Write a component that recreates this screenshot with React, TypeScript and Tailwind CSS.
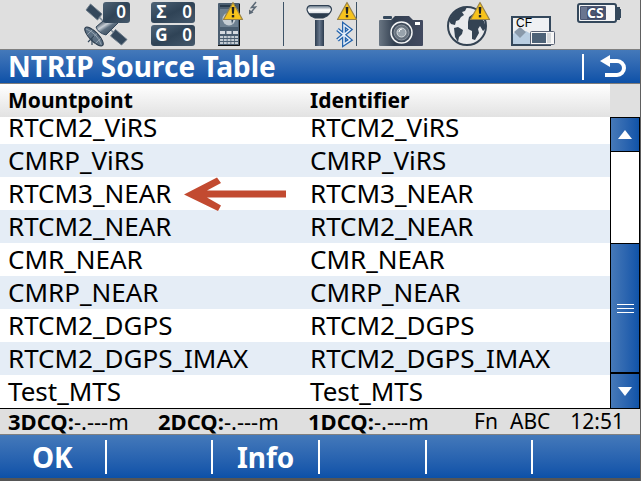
import React from 'react';

interface Mountpoint {
  name: string;
  identifier: string;
}

const mountpoints: Mountpoint[] = [
  { name: 'RTCM2_ViRS', identifier: 'RTCM2_ViRS' },
  { name: 'CMRP_ViRS', identifier: 'CMRP_ViRS' },
  { name: 'RTCM3_NEAR', identifier: 'RTCM3_NEAR' },
  { name: 'RTCM2_NEAR', identifier: 'RTCM2_NEAR' },
  { name: 'CMR_NEAR', identifier: 'CMR_NEAR' },
  { name: 'CMRP_NEAR', identifier: 'CMRP_NEAR' },
  { name: 'RTCM2_DGPS', identifier: 'RTCM2_DGPS' },
  { name: 'RTCM2_DGPS_IMAX', identifier: 'RTCM2_DGPS_IMAX' },
  { name: 'Test_MTS', identifier: 'Test_MTS' },
];

const qualities = ['3DCQ:', '2DCQ:', '1DCQ:'];
const softKeys = ['OK', '', 'Info', '', '', ''];

const SLATE = '#34485c';

// Yellow warning triangle, x is the left edge
const Warning: React.FC<{ x: number }> = ({ x }) => (
  <g transform={`translate(${x} 1)`}>
    <path d="M10 1.5 L19.5 18.5 H0.5 Z" fill="#f7c31c" stroke="#9a8448" strokeWidth="1.2" strokeLinejoin="round" />
    <path d="M8.6 6 H11.4 L10.9 12.8 H9.1 Z" fill="#222" />
    <rect x="8.8" y="14" width="2.4" height="2.4" fill="#222" />
  </g>
);

const SatelliteIcon = () => (
  <svg viewBox="75 0 66 49" className="h-[49px] w-[66px]" role="img" aria-label="Satellites">
    <defs>
      <linearGradient id="badge" x1="0" y1="0" x2="1" y2="1">
        <stop offset="0" stopColor="#4e6376" />
        <stop offset="0.5" stopColor="#2f4356" />
        <stop offset="1" stopColor="#45596c" />
      </linearGradient>
      <linearGradient id="metal" x1="0" y1="0" x2="1" y2="1">
        <stop offset="0.1" stopColor="#28384a" />
        <stop offset="0.35" stopColor="#c9d0d7" />
        <stop offset="0.5" stopColor="#5d6f80" />
        <stop offset="1" stopColor="#223244" />
      </linearGradient>
    </defs>
    <path d="M90.500 4 L102 14 L97.500 20 L86 10 Z" fill={SLATE} stroke="#6d7c8a" />
    <path d="M99 17 L103 21 M111 30 L115 34" stroke="#7a8896" strokeWidth="1.500" />
    <path d="M115.500 29.500 L127 39.500 L121.500 45 L110.500 36 Z" fill={SLATE} stroke="#6d7c8a" />
    <path d="M103 21 L116 21 L118 23 L106 35 Q98 33 96 27 Z" fill="url(#metal)" stroke="#34485c" />
    <g transform="rotate(46 94 36.500)">
      <ellipse cx="94" cy="36.500" rx="12.500" ry="4.500" fill="#5b6f82" stroke="#273748" />
      <path d="M83 37 Q94 32 105 37 M88 33 V40 M94 32 V41 M100 33 V40" stroke="#a9b5c0" strokeWidth="0.700" fill="none" />
    </g>
    <path d="M94 36 L88 42 M92 38 V45" stroke="#34485c" strokeWidth="1.200" />
    <rect x="103" y="2" width="27" height="21" rx="3" fill="url(#badge)" />
    <text x="121" y="18" textAnchor="middle" fontSize="17" fontWeight="600" fill="#fff">0</text>
  </svg>
);

const CountersIcon = () => (
  <svg viewBox="141 0 66 49" className="h-[49px] w-[66px]" role="img" aria-label="Satellite counters">
    <rect x="151" y="2" width="44" height="21" rx="3" fill="url(#badge)" />
    <rect x="151" y="25" width="44" height="21" rx="3" fill="url(#badge)" />
    <g fill="#fff" fontSize="17" fontWeight="700" textAnchor="middle">
      <text x="161.500" y="18">Σ</text>
      <text x="187" y="18" fontWeight="600">0</text>
      <text x="161.500" y="41">G</text>
      <text x="187" y="41" fontWeight="600">0</text>
    </g>
  </svg>
);

const HandheldIcon = () => (
  <svg viewBox="207 0 76 49" className="h-[49px] w-[76px]" role="img" aria-label="Handheld link">
    <rect x="218" y="3" width="22" height="43" rx="1" fill="#4a5d70" />
    <path d="M218 45.500 H239.500 V4" stroke="#111" fill="none" />
    <rect x="220" y="5" width="16" height="2" fill="#27394b" />
    <rect x="220" y="9" width="18" height="18" fill="#6e8091" />
    <circle cx="229" cy="19" r="6.500" fill="#c6cdd4" />
    <path d="M225 15 L230 14 L229 19 L225 20 Z M231 18 L234 18 L232 24 Z" fill={SLATE} />
    <g fill="#d5dae0">
      <rect x="220" y="31" width="5" height="3" />
      <rect x="226.500" y="31" width="5" height="3" />
      <rect x="233" y="31" width="5" height="3" />
    </g>
    <path d="M220 37 H238 M220 40 H238 M220 43 H238" stroke="#c3cbd2" strokeWidth="2" strokeDasharray="3 0.750" />
    <Warning x={223} />
    <path d="M256 2 L251.500 7.500 L255.500 7 L250.500 13" stroke="#5c6976" strokeWidth="1.500" fill="none" />
    <path d="M249 9.500 V14.500 L253.500 12.500 Z" fill="#5c6976" />
  </svg>
);

const ReceiverIcon = () => (
  <svg viewBox="283 0 74 49" className="h-[49px] w-[74px]" role="img" aria-label="Receiver, Bluetooth">
    <defs>
      <linearGradient id="head" x1="0" y1="0" x2="0" y2="1">
        <stop offset="0" stopColor="#56697c" />
        <stop offset="0.35" stopColor="#fff" />
        <stop offset="0.6" stopColor="#dfe3e8" />
        <stop offset="0.65" stopColor="#2b3c4e" />
      </linearGradient>
      <linearGradient id="pole">
        <stop offset="0" stopColor="#2c3c4f" />
        <stop offset="0.5" stopColor="#65758a" />
        <stop offset="1" stopColor="#2c3c4f" />
      </linearGradient>
    </defs>
    <path d="M283.500 2 V46 M356.500 2 V46" stroke="#3d5266" />
    <path d="M310 5.500 H328 Q331 6 331.500 9 Q331.500 12 327 16 L323 18 H315 L311 16 Q307 12 307 9 Q307.500 6 310 5.500 Z" fill="url(#head)" stroke="#2f4053" strokeWidth="1.200" />
    <rect x="315" y="20" width="9" height="26" fill="url(#pole)" />
    <path d="M337.500 29.500 L350 40 L344 44 V25 L350 29.500 L337.500 40" fill="none" stroke="#2464ad" strokeWidth="4" />
    <path d="M337.500 29.500 L350 40 L344 44 V25 L350 29.500 L337.500 40" fill="none" stroke="#e9f1fa" strokeWidth="1.500" />
    <Warning x={337} />
  </svg>
);

const CameraIcon = () => (
  <svg viewBox="357 0 80 49" className="h-[49px] w-[80px]" role="img" aria-label="Camera">
    <defs>
      <linearGradient id="camera">
        <stop offset="0" stopColor="#6a7683" />
        <stop offset="0.35" stopColor="#323f50" />
        <stop offset="1" stopColor="#424a60" />
      </linearGradient>
    </defs>
    <rect x="383" y="16" width="9" height="3" rx="1" fill={SLATE} />
    <path d="M380 20 H391 L395 16 H409 L413 20 H422 Q423 20 423 21 V45 Q423 46 422 46 H380 Q379 46 379 45 V21 Q379 20 380 20 Z" fill="url(#camera)" />
    <circle cx="401.500" cy="32.500" r="10.500" fill="#3f4b5a" stroke="#f3f4f5" strokeWidth="1.500" />
    <circle cx="401.500" cy="32.500" r="7.500" fill="#67727e" stroke="#8b949e" />
    <circle cx="401.500" cy="32.500" r="4.500" fill="#98a3ac" stroke="#d5dadd" />
    <path d="M399 32 A3 3 0 0 1 402 29" stroke="#fff" fill="none" />
    <rect x="415" y="22" width="5" height="3" fill="#fff" />
  </svg>
);

const GlobeIcon = () => (
  <svg viewBox="437 0 66 49" className="h-[49px] w-[66px]" role="img" aria-label="Internet">
    <circle cx="467" cy="26" r="19" fill="#e9eaec" stroke="#344353" strokeWidth="2" />
    <path d="M449 21 Q452 12 461 8 L467 7 L465 11 L462 12 L464 15 L461 17 L459 20 L456 21 L455 25 L451 24 Z" fill="#344353" />
    <path d="M454 28 L458 27 L463 30 L462 34 L459 37 L458 42 L455 37 Z" fill="#344353" />
    <path d="M469 17 L473 14 L479 17 L484 21 L486 28 L483 31 L480 26 L478 29 L479 33 L475 40 L472 39 L472 31 L468 29 L468 22 Z" fill="#344353" />
    <Warning x={470} />
  </svg>
);

const CardIcon = () => (
  <svg viewBox="503 0 60 49" className="h-[49px] w-[60px]" role="img" aria-label="CF card">
    <rect x="512" y="17" width="38" height="28" fill="#eff1f3" stroke={SLATE} strokeWidth="2" />
    <path d="M513 34 L517 31 L521 35 L526 31 L531 34 V44 H513 Z" fill="#b9cee2" />
    <path d="M520 27 L526 32 L520 38 L514 32 Z" fill="#8999aa" />
    <text x="516" y="27" fontSize="12" fill="#000" className="font-['Liberation_Sans',sans-serif]">CF</text>
    <rect x="530.500" y="31.500" width="24" height="13" rx="1" fill="#f7f7f7" stroke="#5a6375" />
    <rect x="532" y="33" width="14" height="10" fill="#4d6277" />
    <rect x="547" y="33" width="4" height="10" fill="#d5d8da" />
  </svg>
);

const BatteryIcon = () => (
  <svg viewBox="563 0 77 49" className="h-[49px] w-[77px]" role="img" aria-label="Battery">
    <rect x="578" y="4" width="38" height="18" rx="2" fill="#f4f5f6" stroke="#34485c" strokeWidth="2" />
    <rect x="580" y="6" width="26" height="14" rx="1" fill="#4c5773" />
    <rect x="581" y="7" width="6" height="12" fill="#6a7690" />
    <path d="M617 7 H620 V9 H621 V18 H620 V20 H617 Z" fill="#34485c" />
    <text x="587" y="18" fontSize="14" fontWeight="700" fill="#fff" stroke="#3b4663" strokeWidth="2" paintOrder="stroke">CS</text>
  </svg>
);

const StatusIcons = () => (
  <header className="flex h-[50px] overflow-hidden border-b border-[#808080] bg-[#dfdfdf] pl-[75px]">
    <SatelliteIcon />
    <CountersIcon />
    <HandheldIcon />
    <ReceiverIcon />
    <CameraIcon />
    <GlobeIcon />
    <CardIcon />
    <BatteryIcon />
  </header>
);

// Red pointer drawn next to the mountpoint to pick
const PointerArrow = () => (
  <svg viewBox="0 0 104 34" className="absolute top-0 left-[183px] h-[34px] w-[104px]" aria-hidden="true">
    <path d="M1 17.500 L34 0.500 L38 6 L24 13.500 H103 V20.500 H24 L38 28.500 L35 34 Z" fill="#c24a30" />
  </svg>
);

const ScrollBar = () => (
  <div className="flex w-[30px] shrink-0 flex-col">
    <div className="h-[33px] bg-[#e0e0e0]" />
    <div className="flex flex-1 flex-col border-x border-t border-black bg-white">
      <button aria-label="Scroll up" className="flex h-[34px] items-center justify-center border-b border-black bg-linear-to-r from-[#4679b8] to-[#0f53a8]">
        <svg viewBox="0 0 14 9" className="h-[9px] w-[14px]" fill="#fff"><path d="M7 0 L14 9 H0 Z" /></svg>
      </button>
      <div className="flex-1" />
      <div className="flex h-[130px] flex-col items-center justify-center gap-[3px] border-y border-black bg-linear-to-r from-[#4679b8] to-[#0f53a8]">
        <span className="h-px w-[17px] bg-white" />
        <span className="h-px w-[17px] bg-white" />
        <span className="h-px w-[17px] bg-white" />
      </div>
      <button aria-label="Scroll down" className="flex h-[35px] items-center justify-center border-t border-black bg-linear-to-r from-[#4679b8] to-[#0f53a8]">
        <svg viewBox="0 0 14 9" className="h-[9px] w-[14px]" fill="#fff"><path d="M0 0 H14 L7 9 Z" /></svg>
      </button>
    </div>
  </div>
);

const SourceTable = () => (
  <table className="flex-1 table-fixed border-collapse text-left text-[26px] text-black">
    <thead>
      <tr className="h-[33px] bg-linear-to-b from-white to-[#e2e2e2] text-[21px] leading-[33px]">
        <th className="w-[310px] p-0 pl-2 font-bold">Mountpoint</th>
        <th className="p-0 font-bold">Identifier</th>
      </tr>
    </thead>
    <tbody>
      {mountpoints.map((point, index) => {
        // The first row is partly scrolled under the header
        const cell = index === 0 ? 'relative p-0 pb-[6px] leading-[21px]' : 'relative p-0 leading-[33px]';
        return (
          <tr key={point.name} className={index % 2 === 1 ? 'bg-[#e5edf6]' : 'bg-white'}>
            <td className={cell}>
              <span className="pl-2">{point.name}</span>
              {point.name === 'RTCM3_NEAR' && <PointerArrow />}
            </td>
            <td className={cell}>{point.identifier}</td>
          </tr>
        );
      })}
    </tbody>
  </table>
);

export default function App() {
  return (
    <div className="border-r border-[#606060] bg-[#dfdfdf] font-['Noto_Sans',sans-serif]">
      <StatusIcons />

      <div className="flex h-[34px] items-center border-b border-[#807c78] bg-linear-to-b from-[#4479ba] to-[#0c51a8] pl-2 text-white">
        <h1 className="flex-1 text-[28px] leading-[33px] font-bold">NTRIP Source Table</h1>
        <button aria-label="Back" className="flex h-[26px] w-[58px] items-center border-l-2 border-white pl-4">
          <svg viewBox="0 0 27 26" className="h-[26px] w-[27px]" fill="none">
            <path d="M8 7 H17 A7 7 0 0 1 17 21 H5" stroke="#fff" strokeWidth="4" />
            <path d="M0 7 L10 1 V13 Z" fill="#fff" />
          </svg>
        </button>
      </div>

      <main className="flex border-b border-black">
        <SourceTable />
        <ScrollBar />
      </main>

      <div className="flex h-[26px] items-center border-b border-[#808080] pl-2 text-[21px] leading-[25px] text-black">
        {qualities.map((label) => (
          <p key={label} className="w-[150px] text-[22px]">
            <strong className="font-bold">{label}</strong>-.---m
          </p>
        ))}
        <p className="ml-auto flex pr-4">
          <span className="mr-3">Fn</span>
          <span className="mr-5">ABC</span>
          <span>12:51</span>
        </p>
      </div>

      <nav className="grid h-[46px] grid-cols-6 items-center border-b-3 border-[#555] bg-linear-to-b from-[#4479ba] to-[#0c51a8] text-white">
        {softKeys.map((label, index) => (
          <button
            key={index}
            aria-label={label || `F${index + 1}`}
            className="h-[34px] border-r-2 border-white text-[28px] leading-[34px] font-bold last:border-r-0"
          >
            {label}
          </button>
        ))}
      </nav>
    </div>
  );
}
